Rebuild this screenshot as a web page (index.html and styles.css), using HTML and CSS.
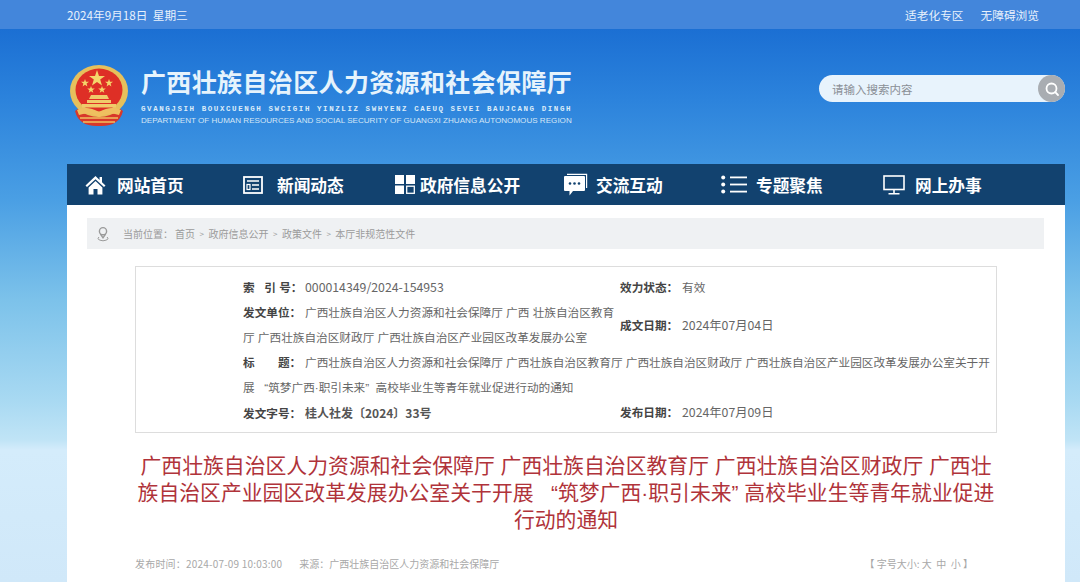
FILE: index.html
```html
<!DOCTYPE html>
<html lang="zh-CN">

<head>
    <meta charset="UTF-8">
    <meta name="viewport" content="width=device-width, initial-scale=1.0">
    <title>广西壮族自治区人力资源和社会保障厅</title>
    <link rel="stylesheet" href="styles.css">
</head>

<body>
    <div class="topbar">
        <div class="topbar-date">2024年9月18日&nbsp;&nbsp;星期三</div>
        <div class="topbar-links">
            <a>适老化专区</a>
            <a>无障碍浏览</a>
        </div>
    </div>

    <div class="header">
        <div class="logo">
            <svg class="emblem" viewBox="0 0 60 62" width="60" height="62">
                <path d="M6 46 Q10 62 30 61 Q50 62 54 46 L46 40 H14Z" fill="#d8382a" />
                <ellipse cx="30" cy="26" rx="29" ry="26" fill="#e6c05c" />
                <ellipse cx="30" cy="25" rx="23.5" ry="21.5" fill="#de2f26" />
                <polygon points="28,5 30,11 36,11 31.2,14.6 33,20.5 28,17 23,20.5 24.8,14.6 20,11 26,11" fill="#f4d66a" />
                <polygon points="16,14 17,16.8 20,16.8 17.6,18.6 18.4,21.4 16,19.8 13.6,21.4 14.4,18.6 12,16.8 15,16.8" fill="#f4d66a" />
                <polygon points="40,14 41,16.8 44,16.8 41.6,18.6 42.4,21.4 40,19.8 37.6,21.4 38.4,18.6 36,16.8 39,16.8" fill="#f4d66a" />
                <polygon points="22,21 23,23.6 25.8,23.6 23.5,25.2 24.3,27.8 22,26.2 19.7,27.8 20.5,25.2 18.2,23.6 21,23.6" fill="#f4d66a" />
                <polygon points="33,21 34,23.6 36.8,23.6 34.5,25.2 35.3,27.8 33,26.2 30.7,27.8 31.5,25.2 29.2,23.6 32,23.6" fill="#f4d66a" />
                <path d="M22 30 H38 L40 34 H20Z M18 35 H42 V38 H18Z M13 39 H47 V42.5 H13Z" fill="#f0cb6a" />
                <path d="M8 45 Q18 40 30 47 Q42 40 52 45 L50 50 Q40 46 30 52 Q20 46 10 50Z" fill="#efc060" />
                <path d="M11 53 H49 M14 57 H46" stroke="#efc060" stroke-width="1.5" fill="none" />
            </svg>
            <div class="logo-text">
                <div class="logo-title">广西壮族自治区人力资源和社会保障厅</div>
                <div class="logo-zhuang">GVANGJSIH BOUXCUENGH SWCIGIH YINZLIZ SWHYENZ CAEUQ SEVEI BAUJCANG DINGH</div>
                <div class="logo-english">DEPARTMENT OF HUMAN RESOURCES AND SOCIAL SECURITY OF GUANGXI ZHUANG AUTONOMOUS REGION</div>
            </div>
        </div>
        <div class="search">
            <span class="search-text">请输入搜索内容</span>
            <span class="search-btn">
                <svg viewBox="0 0 16 16" width="16" height="16" fill="none" stroke="#fff" stroke-width="1.8">
                    <circle cx="7.5" cy="7.5" r="5" />
                    <path d="M11.2 11.2 L14 14" stroke-linecap="round" />
                </svg>
            </span>
        </div>
    </div>

    <div class="main">
        <div class="nav">
            <a class="nav-item">
                <svg class="nav-icon" viewBox="0 0 21 20" width="21" height="20" fill="#fff">
                    <path d="M10.5 1 L0.5 10.5 L2 12 L10.5 4.2 L19 12 L20.5 10.5 L17 7.2 V2 H14.6 V4.9Z" />
                    <path d="M3.6 12.4 L10.5 6 L17.4 12.4 V19.4 H12.5 V14 H8.5 V19.4 H3.6Z" />
                </svg>
                <span class="nav-label nav-label-home">网站首页</span>
            </a>
            <a class="nav-item">
                <svg class="nav-icon" viewBox="0 0 20 18" width="20" height="18" fill="none" stroke="#fff">
                    <rect x="1" y="1" width="18" height="16" stroke-width="1.8" />
                    <path d="M4 5 H16 M9 9 H16 M9 13 H16" stroke-width="1.6" />
                    <rect x="4" y="8.5" width="3" height="5" stroke-width="1.2" />
                </svg>
                <span class="nav-label nav-label-news">新闻动态</span>
            </a>
            <a class="nav-item">
                <svg class="nav-icon" viewBox="0 0 20 19" width="20" height="19" fill="#fff">
                    <rect x="0" y="0" width="9" height="9" />
                    <rect x="11" y="0" width="9" height="9" />
                    <rect x="0" y="10.5" width="9" height="8.5" />
                    <rect x="11.7" y="11.2" width="7.6" height="7.1" fill="none" stroke="#fff" stroke-width="1.3" />
                </svg>
                <span class="nav-label nav-label-gov">政府信息公开</span>
            </a>
            <a class="nav-item">
                <svg class="nav-icon" viewBox="0 0 25 23" width="25" height="23" fill="#fff">
                    <path d="M4 0.8 H24.2 V15 H23 V2 H4Z" />
                    <path d="M2 3 H21 Q22 3 22 4 V17 Q22 18 21 18 H10 L6.5 22.5 V18 H2 Q1 18 1 17 V4 Q1 3 2 3Z" />
                    <circle cx="7" cy="10.5" r="1.3" fill="#12426f" />
                    <circle cx="11.5" cy="10.5" r="1.3" fill="#12426f" />
                    <circle cx="16" cy="10.5" r="1.3" fill="#12426f" />
                </svg>
                <span class="nav-label nav-label-talk">交流互动</span>
            </a>
            <a class="nav-item">
                <svg class="nav-icon" viewBox="0 0 26 19" width="26" height="19" fill="#fff">
                    <circle cx="2.2" cy="2.5" r="2" />
                    <circle cx="2.2" cy="9.5" r="2" />
                    <circle cx="2.2" cy="16.5" r="2" />
                    <rect x="9" y="1.5" width="17" height="1.8" />
                    <rect x="9" y="8.6" width="17" height="1.8" />
                    <rect x="9" y="15.7" width="17" height="1.8" />
                </svg>
                <span class="nav-label nav-label-topic">专题聚焦</span>
            </a>
            <a class="nav-item">
                <svg class="nav-icon" viewBox="0 0 22 20" width="22" height="20" fill="none" stroke="#fff" stroke-width="1.6">
                    <rect x="1" y="1" width="20" height="13.5" />
                    <path d="M11 14.5 V18.5 M5.5 18.8 H16.5" />
                </svg>
                <span class="nav-label nav-label-online">网上办事</span>
            </a>
        </div>

        <div class="crumb">
            <svg class="crumb-icon" viewBox="0 0 16 16" width="16" height="16" fill="none" stroke="#9a9a9a" stroke-width="1.4">
                <circle cx="8" cy="5.2" r="3.6" />
                <path d="M5.4 8 L8 11.8 L10.6 8" />
                <path d="M4 11 Q0.8 13.8 8 14.8 Q15.2 13.8 12 11" stroke-width="1" />
            </svg>
            <span class="crumb-text crumb-here">当前位置：</span>
            <span class="crumb-text">首页</span>
            <span class="crumb-sep">&gt;</span>
            <span class="crumb-text">政府信息公开</span>
            <span class="crumb-sep">&gt;</span>
            <span class="crumb-text">政策文件</span>
            <span class="crumb-sep">&gt;</span>
            <span class="crumb-text">本厅非规范性文件</span>
        </div>

        <div class="info-box">
            <div class="info-row">
                <div class="info-left"><b class="label">索&nbsp;&nbsp;&nbsp;引&nbsp;号：</b><span class="num">000014349/2024-154953</span></div>
                <div class="info-right"><b class="label">效力状态：</b>有效</div>
            </div>
            <div class="info-row info-row-center">
                <div class="info-left"><b class="label">发文单位：</b>广西壮族自治区人力资源和社会保障厅 广西 壮族自治区教育厅 广西壮族自治区财政厅 广西壮族自治区产业园区改革发展办公室</div>
                <div class="info-right"><b class="label">成文日期：</b><span class="num">2024年07月04日</span></div>
            </div>
            <div class="info-full"><b class="label">标&emsp;&emsp;题：</b>广西壮族自治区人力资源和社会保障厅 广西壮族自治区教育厅 广西壮族自治区财政厅 广西壮族自治区产业园区改革发展办公室关于开展&nbsp;&nbsp;&nbsp;“筑梦广西·职引未来”&nbsp;&nbsp;高校毕业生等青年就业促进行动的通知</div>
            <div class="info-row">
                <div class="info-left"><b class="label">发文字号：</b><b class="info-docno">桂人社发〔2024〕33号</b></div>
                <div class="info-right"><b class="label">发布日期：</b><span class="num">2024年07月09日</span></div>
            </div>
        </div>

        <h1 class="article-title">广西壮族自治区人力资源和社会保障厅 广西壮族自治区教育厅 广西壮族自治区财政厅 广西壮族自治区产业园区改革发展办公室关于开展&nbsp;&nbsp;&nbsp;“筑梦广西·职引未来”&nbsp;高校毕业生等青年就业促进行动的通知</h1>

        <div class="article-meta">
            <div class="meta-left">
                <span class="meta-date">发布时间：2024-07-09 10:03:00</span>
                <span>来源：广西壮族自治区人力资源和社会保障厅</span>
            </div>
            <div class="meta-size">【 字号大小: 大&nbsp;&nbsp;中&nbsp;&nbsp;小 】</div>
        </div>
    </div>
</body>

</html>
```

FILE: styles.css
```css
html,
body {
    height: 100%;
}

body {
    margin: 0;
    padding: 0;
    height: 582px;
    overflow: hidden;
    font-family: "Noto Sans CJK SC", "Liberation Sans", sans-serif;
    background: linear-gradient(to bottom, #1b6fd3 29px, #2c83dc 100px, #4a9fe4 200px, #7cc2ea 300px, #a8d9f2 400px, #c0e4f6 440px, #d4ecfb 450px, #d0e8f9 582px);
}

/* top strip */
.topbar {
    height: 29px;
    padding: 0 41px 0 67px;
    display: flex;
    justify-content: space-between;
    align-items: center;
    background: #4386db;
    color: #e8f1fb;
    font-size: 11.7px;
}

.topbar-links {
    display: flex;
    gap: 17px;
}

/* logo + search */
.header {
    height: 135px;
    padding: 0 15px 0 69px;
    display: flex;
    justify-content: space-between;
    align-items: flex-start;
}

.logo {
    display: flex;
    padding-top: 36px;
    gap: 12px;
}

.logo-text {
    width: 432px;
    margin-top: -2px;
}

.logo-title {
    font-size: 25px;
    line-height: 36px;
    letter-spacing: 0.36px;
    font-weight: 700;
    color: #e6f3fc;
    white-space: nowrap;
}

.logo-zhuang {
    font-family: "Liberation Mono", monospace;
    font-size: 7.5px;
    line-height: 10px;
    font-weight: 700;
    letter-spacing: 1.57px;
    color: #dcecf9;
    white-space: nowrap;
    margin-top: 5px;
}

.logo-english {
    font-family: "Liberation Sans", sans-serif;
    font-size: 8.08px;
    line-height: 13px;
    color: #d4e6f6;
    white-space: nowrap;
}

.search {
    margin-top: 46px;
    width: 246px;
    height: 27px;
    border-radius: 14px;
    background: #e8f3fc;
    display: flex;
    align-items: center;
    justify-content: space-between;
}

.search-text {
    padding-left: 13px;
    font-size: 11.5px;
    color: #8a8f96;
}

.search-btn {
    width: 27px;
    height: 27px;
    border-radius: 50%;
    background: #a9adb2;
    display: flex;
    align-items: center;
    justify-content: center;
}

/* white page */
.main {
    margin: 0 15px 0 67px;
    background: #fff;
    height: 418px;
    overflow: hidden;
}

.nav {
    height: 41px;
    padding-left: 18px;
    background: #12426f;
    display: grid;
    grid-template-columns: 158px 152px 168px 158px 162px 1fr;
    align-items: center;
}

.nav-item {
    display: flex;
    align-items: center;
    color: #fff;
}

.nav-label {
    font-size: 16.7px;
    font-weight: 700;
    white-space: nowrap;
}

.nav-label-home {
    margin-left: 11px;
}

.nav-label-news {
    margin-left: 14px;
}

.nav-label-gov {
    margin-left: 5px;
}

.nav-label-talk {
    margin-left: 8px;
}

.nav-label-topic {
    margin-left: 9px;
}

.nav-label-online {
    margin-left: 10px;
}

.crumb {
    margin: 13px 21px 0 20px;
    height: 31px;
    padding-left: 8px;
    background: #eff1f3;
    display: flex;
    align-items: center;
    gap: 3px;
    font-size: 10px;
    color: #9b9b9b;
}

.crumb-icon {
    margin-right: 9px;
}

.crumb-here {
    margin-right: -1px;
}

.crumb-sep {
    font-size: 8px;
    margin: 0 1.5px;
}

/* document info */
.info-box {
    margin: 17px 68px 0;
    height: 167px;
    box-sizing: border-box;
    border: 1px solid #dddddd;
    padding: 8px 4px 0 107px;
    font-family: "Liberation Sans", "Noto Sans CJK SC", sans-serif;
    font-size: 11.65px;
    line-height: 25px;
    color: #666;
}

.info-box b {
    color: #444;
    font-weight: 700;
}

.info-box b.label {
    display: inline-block;
    width: 62px;
    white-space: nowrap;
}

.info-row {
    display: flex;
}

.info-row-center {
    align-items: center;
}

.info-left {
    width: 377px;
    padding-right: 2px;
    box-sizing: border-box;
}

.info-right {
    flex: 1;
}

.num {
    font-family: "Noto Sans CJK SC", sans-serif;
    font-size: 12.3px;
}

.info-box b.info-docno {
    font-family: "Noto Sans CJK SC", sans-serif;
    color: #555;
    font-size: 12px;
}

/* title */
.article-title {
    margin: 19px 68px 0;
    font-family: "Liberation Sans", "Noto Sans CJK SC", sans-serif;
    font-size: 20.85px;
    line-height: 27px;
    font-weight: 400;
    color: #b0333a;
    text-align: center;
}

.article-meta {
    margin: 23px 92px 0 68px;
    display: flex;
    justify-content: space-between;
    font-size: 10px;
    line-height: 16px;
    color: #a8a8a8;
}

.meta-left {
    display: flex;
    gap: 17px;
}

.meta-date {
    letter-spacing: 0.2px;
}
```
